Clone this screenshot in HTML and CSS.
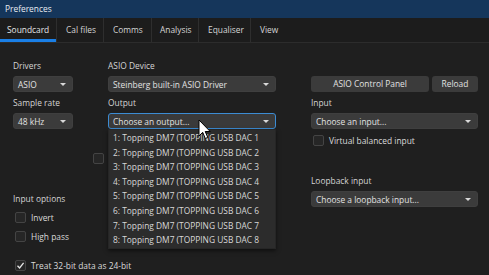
FILE: index.html
```html
<!DOCTYPE html>
<html>
<head>
<meta charset="utf-8">
<link rel="stylesheet" href="styles.css">
</head>
<body>
<div class="window">
  <div class="titlebar">Preferences</div>
  <div class="tabs">
    <div class="tab active">Soundcard</div>
    <div class="tab">Cal files</div>
    <div class="tab">Comms</div>
    <div class="tab">Analysis</div>
    <div class="tab">Equaliser</div>
    <div class="tab">View</div>
  </div>
  <div class="content">
    <div class="col col-left">
      <div class="label">Drivers</div>
      <div class="select"><span>ASIO</span><i class="arrow"></i></div>
      <div class="label">Sample rate</div>
      <div class="select"><span>48 kHz</span><i class="arrow"></i></div>
      <div class="label section">Input options</div>
      <div class="check-row"><span class="box"></span><span>Invert</span></div>
      <div class="check-row"><span class="box"></span><span>High pass</span></div>
      <div class="check-row treat"><span class="box checked"><svg viewBox="0 0 11 11" width="11" height="11"><path d="M2.5 5.8 L4.6 8 L8.6 2.8" fill="none" stroke="#e6e6e6" stroke-width="1.3"/></svg></span><span class="nowrap">Treat 32-bit data as 24-bit</span></div>
    </div>
    <div class="col col-mid">
      <div class="label">ASIO Device</div>
      <div class="select"><span>Steinberg built-in ASIO Driver</span><i class="arrow"></i></div>
      <div class="label">Output</div>
      <div class="select-wrap">
        <div class="select focused"><span>Choose an output...</span><i class="arrow"></i></div>
        <ul class="popup">
          <li>1: Topping DM7 (TOPPING USB DAC 1</li>
          <li>2: Topping DM7 (TOPPING USB DAC 2</li>
          <li>3: Topping DM7 (TOPPING USB DAC 3</li>
          <li>4: Topping DM7 (TOPPING USB DAC 4</li>
          <li>5: Topping DM7 (TOPPING USB DAC 5</li>
          <li>6: Topping DM7 (TOPPING USB DAC 6</li>
          <li>7: Topping DM7 (TOPPING USB DAC 7</li>
          <li>8: Topping DM7 (TOPPING USB DAC 8</li>
        </ul>
        <svg class="cursor" width="14" height="21" viewBox="0 0 14 21"><path d="M1 1 L1 17 L4.7 13.3 L7.3 19.5 L9.8 18.4 L7.2 12.5 L12.2 12.5 Z" fill="#ffffff" stroke="#000000" stroke-width="1"/></svg>
      </div>
      <div class="hidden-check"><span class="box"></span></div>
    </div>
    <div class="col col-right">
      <div class="label empty"></div>
      <div class="buttons">
        <div class="button wide">ASIO Control Panel</div>
        <div class="button">Reload</div>
      </div>
      <div class="label">Input</div>
      <div class="select"><span>Choose an input...</span><i class="arrow"></i></div>
      <div class="check-row vbi"><span class="box"></span><span>Virtual balanced input</span></div>
      <div class="label loop">Loopback input</div>
      <div class="select"><span>Choose a loopback input...</span><i class="arrow"></i></div>
    </div>
  </div>
</div>
</body>
</html>
```

FILE: styles.css
```css
* { box-sizing: border-box; }
html, body {
  margin: 0;
  padding: 0;
  width: 489px;
  height: 275px;
  overflow: hidden;
  background: #1f1f1f;
  font-family: "Open Sans", "Noto Sans", "DejaVu Sans", sans-serif;
  font-size: 8.4px;
  color: #dedede;
}
.window { width: 489px; height: 275px; display: flex; flex-direction: column; }
.titlebar {
  height: 19px;
  background: #15365b;
  color: #e8ecf2;
  padding-left: 5px;
  line-height: 18px;
}
.tabs {
  height: 25px;
  display: flex;
  background: #1c1c1c;
  border-bottom: 1px solid #2c2c2c;
}
.tab {
  height: 24px;
  line-height: 24px;
  border-right: 1px solid #2e2e2e;
  color: #d6d6d6;
  flex: none;
}
.tab:nth-child(1) { width: 57px; padding-left: 7px; }
.tab:nth-child(2) { width: 47px; padding-left: 9px; }
.tab:nth-child(3) { width: 48px; padding-left: 9px; }
.tab:nth-child(4) { width: 47px; padding-left: 8px; }
.tab:nth-child(5) { width: 52px; padding-left: 9px; }
.tab:nth-child(6) { width: 40px; padding-left: 9px; border-right: none; }
.tab.active { box-shadow: inset 0 -3px 0 #1a7fe6; color: #e6e6e6; }
.content {
  flex: 1;
  display: flex;
  padding: 0 0 0 13px;
  gap: 35px;
}
.col { display: flex; flex-direction: column; }
.col-left { width: 60px; }
.col-mid { width: 168px; }
.col-right { width: 167px; }
.label {
  height: 12px;
  line-height: 12px;
  margin-top: 5px;
  margin-bottom: 4px;
  color: #d4d4d4;
  white-space: nowrap;
}
.col .label:first-child { margin-top: 17px; }
.select {
  height: 16px;
  background: #3b3b3b;
  border-radius: 3px;
  border: 1px solid #3f3f3f;
  display: flex;
  align-items: center;
  justify-content: space-between;
  padding: 0 6px 0 4px;
  color: #e2e2e2;
  white-space: nowrap;
}
.select.focused { border-color: #3c8cd3; background: #3a3a3a; }
.arrow {
  width: 0; height: 0;
  border-left: 3px solid transparent;
  border-right: 3px solid transparent;
  border-top: 3px solid #d8d8d8;
}
.select-wrap { position: relative; }
.popup {
  position: absolute;
  left: 0; top: 16px;
  width: 168px;
  margin: 0;
  padding: 1px 0 0 0;
  list-style: none;
  background: #2c2c2c;
  border: 1px solid #262626;
  box-shadow: 0 2px 4px rgba(0,0,0,0.5);
  z-index: 5;
}
.popup li {
  height: 14.6px;
  line-height: 14.6px;
  padding-left: 4px;
  color: #d8d8d8;
  white-space: nowrap;
}
.cursor { position: absolute; left: 90px; top: 6px; z-index: 10; }
.hidden-check { margin: 24px 0 0 -15px; }
.box {
  display: inline-block;
  width: 11px; height: 11px;
  border: 1px solid #444;
  border-radius: 2px;
  background: #262626;
  flex: none;
}
.box svg { display: block; margin: -1px 0 0 -1px; }
.check-row {
  display: flex;
  align-items: center;
  gap: 5px;
  height: 19px;
  padding-left: 2px;
  color: #dadada;
  white-space: nowrap;
}
.label.section { margin-top: 64px; margin-bottom: 3px; }
.check-row.treat { margin-top: 10px; }
.nowrap { white-space: nowrap; }
.buttons { display: flex; gap: 3px; }
.button {
  height: 16px;
  line-height: 16px;
  background: #3b3b3b;
  border-radius: 3px;
  text-align: center;
  color: #e2e2e2;
  width: 46px;
}
.button.wide { width: 118px; }
.check-row.vbi { margin-top: 1px; height: 21px; }
.label.loop { margin-top: 24px; }
```
